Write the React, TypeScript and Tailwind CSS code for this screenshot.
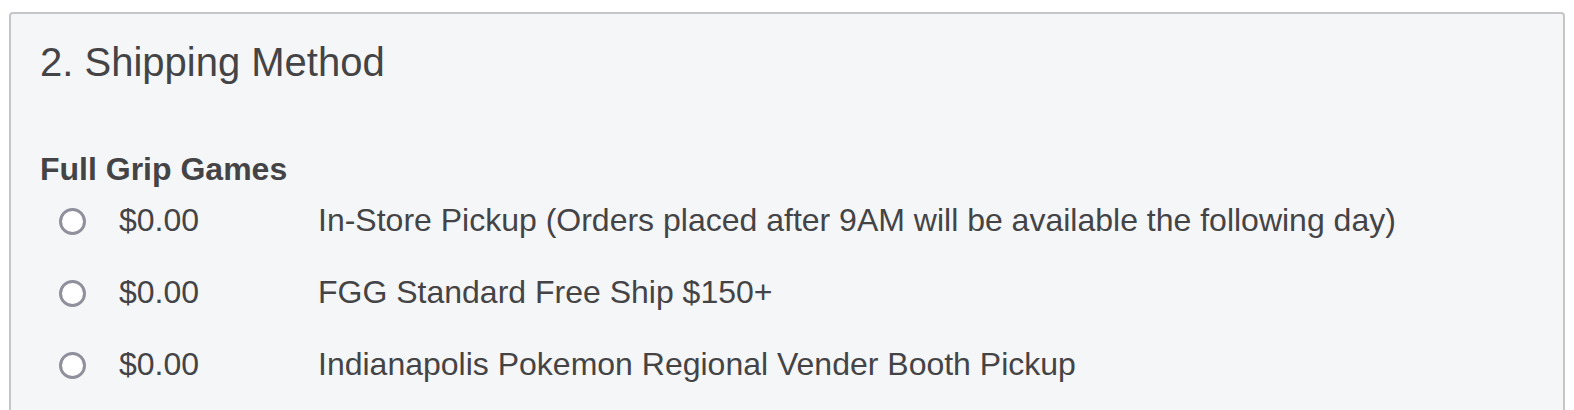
import React from 'react';

interface ShippingOption {
  id: string;
  price: string;
  label: string;
}

const options: ShippingOption[] = [
  { id: 'pickup', price: '$0.00', label: 'In-Store Pickup (Orders placed after 9AM will be available the following day)' },
  { id: 'free', price: '$0.00', label: 'FGG Standard Free Ship $150+' },
  { id: 'booth', price: '$0.00', label: 'Indianapolis Pokemon Regional Vender Booth Pickup' },
];

export default function App() {
  return (
    <div className="min-h-[410px] bg-white px-[9px] pt-[12px] font-['Liberation_Sans',Arial,sans-serif] text-[#444446]">
      <div className="min-h-[420px] rounded-[4px] border-2 border-[#c6c6c8] bg-[#f5f6f8] pl-[29px] pt-[24px]">
        {/* Header */}
        <h2 className="text-[40px] leading-[48px]">2. Shipping Method</h2>

        {/* Carrier group */}
        <div className="mt-[63px]">
          <h3 className="text-[32px] font-bold leading-[40px]">Full Grip Games</h3>
          <div className="mt-[11px] flex flex-col gap-[32px]">
            {options.map((opt) => (
              <label key={opt.id} className="flex cursor-pointer text-[32px] leading-[40px]">
                <span className="ml-[19px] mt-[8px] box-border h-[27px] w-[27px] shrink-0 rounded-full border-[3px] border-[#90909c] bg-white" />
                <span className="ml-[33px] w-[199px] shrink-0">{opt.price}</span>
                <span>{opt.label}</span>
              </label>
            ))}
          </div>
        </div>
      </div>
    </div>
  );
}
